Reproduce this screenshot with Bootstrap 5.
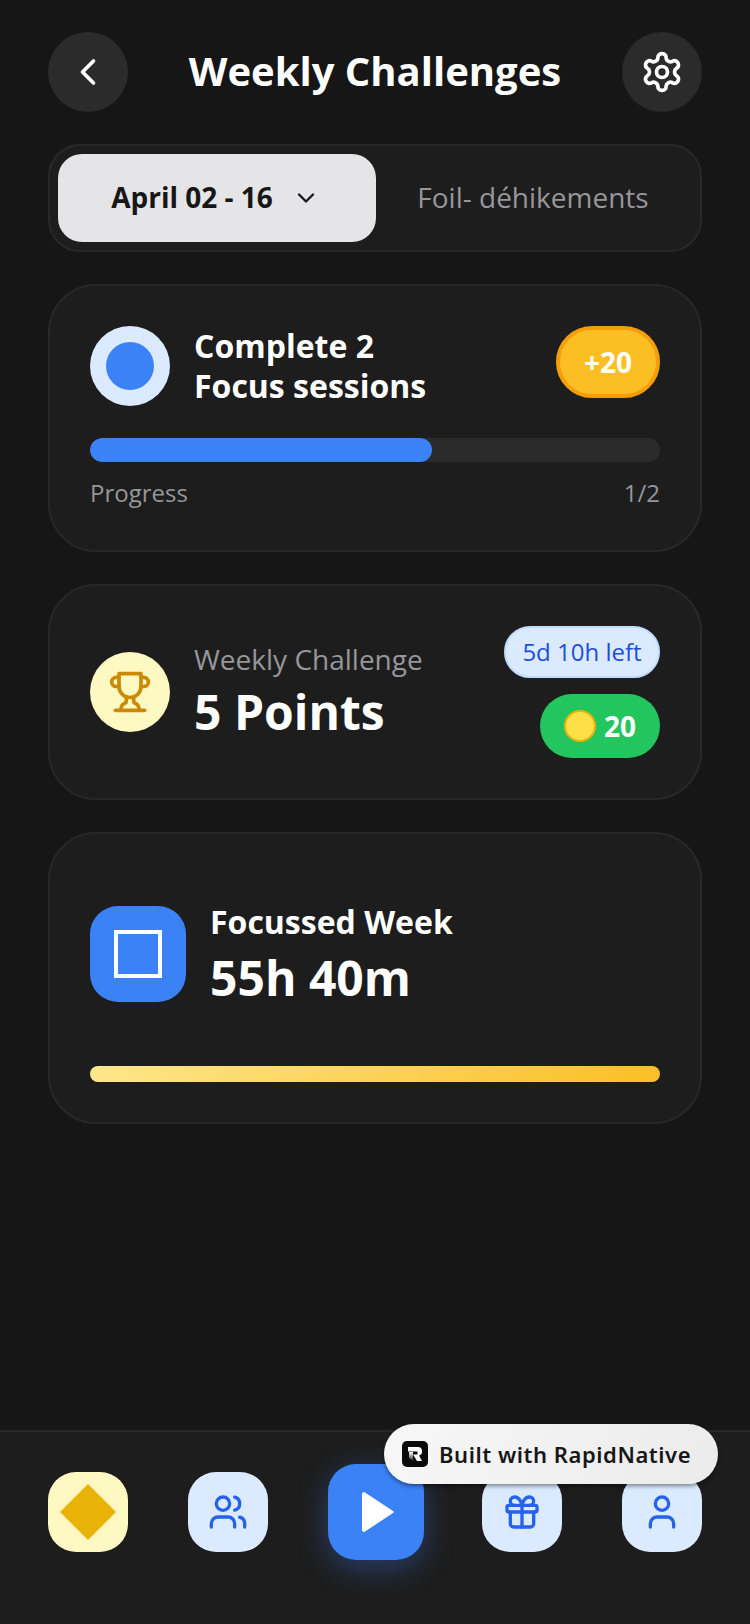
<!DOCTYPE html>
<html lang="en">
<head>
<meta charset="utf-8">
<title>Weekly Challenges</title>
<link href="https://cdn.jsdelivr.net/npm/bootstrap@5.3.0/dist/css/bootstrap.min.css" rel="stylesheet">
<style>
html,body{height:100%;}
body{background:#161616;font-family:"Open Sans","Liberation Sans",sans-serif;color:#fff;}
.screen{width:750px;height:1624px;overflow:hidden;}
.page-body{padding:32px 48px 0;}
.round-btn{width:80px;height:80px;border-radius:50%;background:#2b2b2b;}
.page-title{font-size:40px;line-height:56px;font-weight:700;margin-bottom:2px;}
.tab-wrap{height:108px;padding:8px;margin-top:32px;background:#1d1d1d;border:2px solid #282828;border-radius:32px;}
.tab-on{width:318px;padding-right:3px;gap:19px;background:#e5e5e7;border-radius:24px;color:#171717;font-size:28px;font-weight:700;}
.tab-on span{margin-bottom:2px;}
.tab-off{font-size:28px;color:#96969b;padding:0 2px 2px 0;}
.panel{margin-top:32px;padding:40px;background:#1d1d1d;border:2px solid #282828;border-radius:48px;}
.disc{width:80px;height:80px;border-radius:50%;}
.disc-blue{background:#dbeafe;}
.disc-dot{width:48px;height:48px;border-radius:50%;background:#3b82f6;}
.disc-yellow{background:#fef9c3;}
.task-title{font-size:32px;line-height:40px;font-weight:700;}
.gain-pill{width:104px;height:72px;background:#fbbf24;border:4px solid #f59e0b;border-radius:36px;font-size:28px;font-weight:700;}
.track{height:24px;margin-top:32px;background:#2b2b2b;border-radius:12px;overflow:hidden;}
.track-fill{height:100%;background:#3b82f6;border-radius:12px;}
.meter-row{margin-top:14px;font-size:24px;line-height:34px;color:#96969b;}
.sub-label{font-size:28px;line-height:36px;color:#96969b;}
.big-value{font-size:48px;font-weight:700;}
.value-points{line-height:62px;margin-top:4px;}
.value-time{line-height:56px;margin-top:8px;}
.time-pill{width:156px;height:52px;background:#dbeafe;border:2px solid #bfdbfe;border-radius:26px;font-size:24px;color:#1d4ed8;}
.coin-pill{width:120px;height:64px;margin-top:16px;background:#22c55e;border-radius:32px;font-size:28px;font-weight:700;}
.coin{width:32px;height:32px;border-radius:50%;background:#fde047;border:2px solid #eab308;}
.square-icon{width:96px;height:96px;background:#3b82f6;border-radius:28px;}
.square-in{width:48px;height:48px;border:4px solid #fff;}
.week-block{padding:28px 0;}
.week-title{font-size:32px;line-height:40px;font-weight:700;}
.week-bar{height:16px;margin-top:32px;border-radius:8px;background:linear-gradient(90deg,#fde68a,#fbbf24);}
.tab-bar{position:relative;height:194px;padding:40px 48px 72px;gap:60px;background:#1d1d1d;border-top:2px solid #282828;}
.nav-tile{width:80px;height:80px;border-radius:28px;background:#dbeafe;}
.nav-gold{background:#fef9c3;}
.nav-play{width:96px;height:96px;margin-right:-2px;border-radius:28px;background:#3b82f6;box-shadow:0 8px 30px rgba(59,130,246,.35);}
.built-tag{position:absolute;left:384px;top:-8px;width:334px;height:60px;padding-left:18px;gap:11px;border-radius:30px;background:linear-gradient(120deg,#f7f7f7,#ebebeb);box-shadow:0 2px 4px rgba(0,0,0,.45);color:#171717;font-family:"Noto Sans","Open Sans",sans-serif;font-size:22px;font-weight:600;letter-spacing:.55px;}
.tag-logo{width:26px;height:26px;}
</style>
</head>
<body>
<div class="screen d-flex flex-column">
  <div class="page-body flex-grow-1">
    <header class="d-flex justify-content-between align-items-center">
      <div class="round-btn d-flex align-items-center justify-content-center">
        <svg width="44" height="44" viewBox="0 0 24 24" fill="none" stroke="#fff" stroke-width="2" stroke-linecap="round" stroke-linejoin="round"><path d="m15 18-6-6 6-6"/></svg>
      </div>
      <div class="page-title">Weekly Challenges</div>
      <div class="round-btn d-flex align-items-center justify-content-center">
        <svg width="44" height="44" viewBox="0 0 24 24" fill="none" stroke="#fff" stroke-width="2" stroke-linecap="round" stroke-linejoin="round"><path d="M12.22 2h-.44a2 2 0 0 0-2 2v.18a2 2 0 0 1-1 1.73l-.43.25a2 2 0 0 1-2 0l-.15-.08a2 2 0 0 0-2.73.73l-.22.38a2 2 0 0 0 .73 2.73l.15.1a2 2 0 0 1 1 1.72v.51a2 2 0 0 1-1 1.74l-.15.09a2 2 0 0 0-.73 2.73l.22.38a2 2 0 0 0 2.73.73l.15-.08a2 2 0 0 1 2 0l.43.25a2 2 0 0 1 1 1.73V20a2 2 0 0 0 2 2h.44a2 2 0 0 0 2-2v-.18a2 2 0 0 1 1-1.73l.43-.25a2 2 0 0 1 2 0l.15.08a2 2 0 0 0 2.73-.73l.22-.39a2 2 0 0 0-.73-2.73l-.15-.08a2 2 0 0 1-1-1.74v-.5a2 2 0 0 1 1-1.74l.15-.09a2 2 0 0 0 .73-2.73l-.22-.38a2 2 0 0 0-2.73-.73l-.15.08a2 2 0 0 1-2 0l-.43-.25a2 2 0 0 1-1-1.73V4a2 2 0 0 0-2-2z"/><circle cx="12" cy="12" r="3"/></svg>
      </div>
    </header>

    <div class="tab-wrap d-flex">
      <div class="tab-on d-flex align-items-center justify-content-center">
        <span>April 02 - 16</span>
        <svg width="28" height="28" viewBox="0 0 24 24" fill="none" stroke="#171717" stroke-width="2" stroke-linecap="round" stroke-linejoin="round"><path d="m6 9 6 6 6-6"/></svg>
      </div>
      <div class="tab-off flex-grow-1 d-flex align-items-center justify-content-center">Foil- déhikements</div>
    </div>

    <section class="panel">
      <div class="d-flex align-items-start">
        <div class="disc disc-blue d-flex align-items-center justify-content-center flex-shrink-0"><div class="disc-dot"></div></div>
        <div class="task-title flex-grow-1 ms-4">Complete 2<br>Focus sessions</div>
        <div class="gain-pill d-flex align-items-center justify-content-center">+20</div>
      </div>
      <div class="track"><div class="track-fill" style="width:60%"></div></div>
      <div class="meter-row d-flex justify-content-between"><span>Progress</span><span>1/2</span></div>
    </section>

    <section class="panel d-flex align-items-center">
      <div class="disc disc-yellow d-flex align-items-center justify-content-center flex-shrink-0">
        <svg width="44" height="44" viewBox="0 0 24 24" fill="none" stroke="#ca8a04" stroke-width="2" stroke-linecap="round" stroke-linejoin="round"><path d="M6 9H4.5a2.5 2.5 0 0 1 0-5H6"/><path d="M18 9h1.5a2.5 2.5 0 0 0 0-5H18"/><path d="M4 22h16"/><path d="M10 14.66V17c0 .55-.47.98-.97 1.21C7.85 18.75 7 20.24 7 22"/><path d="M14 14.66V17c0 .55.47.98.97 1.21C16.15 18.75 17 20.24 17 22"/><path d="M18 2H6v7a6 6 0 0 0 12 0V2Z"/></svg>
      </div>
      <div class="flex-grow-1 ms-4">
        <div class="sub-label">Weekly Challenge</div>
        <div class="big-value value-points">5 Points</div>
      </div>
      <div class="d-flex flex-column align-items-end">
        <div class="time-pill d-flex align-items-center justify-content-center">5d 10h left</div>
        <div class="coin-pill d-flex align-items-center justify-content-center gap-2"><span class="coin"></span><span>20</span></div>
      </div>
    </section>

    <section class="panel">
      <div class="week-block d-flex align-items-center">
        <div class="square-icon d-flex align-items-center justify-content-center flex-shrink-0"><div class="square-in"></div></div>
        <div class="ms-4">
          <div class="week-title">Focussed Week</div>
          <div class="big-value value-time">55h 40m</div>
        </div>
      </div>
      <div class="week-bar"></div>
    </section>
  </div>

  <nav class="tab-bar d-flex align-items-center">
    <div class="nav-tile nav-gold d-flex align-items-center justify-content-center">
      <svg width="56" height="56" viewBox="0 0 56 56"><path d="M28 0 56 28 28 56 0 28Z" fill="#eab308"/></svg>
    </div>
    <div class="nav-tile d-flex align-items-center justify-content-center">
      <svg width="40" height="40" viewBox="0 0 24 24" fill="none" stroke="#2563eb" stroke-width="2" stroke-linecap="round" stroke-linejoin="round"><path d="M16 21v-2a4 4 0 0 0-4-4H6a4 4 0 0 0-4 4v2"/><circle cx="9" cy="7" r="4"/><path d="M22 21v-2a4 4 0 0 0-3-3.87"/><path d="M16 3.13a4 4 0 0 1 0 7.75"/></svg>
    </div>
    <div class="nav-play d-flex align-items-center justify-content-center">
      <svg width="48" height="48" viewBox="0 0 48 48"><path d="M10 6a2 2 0 0 1 3-1.6L41 23a1.2 1.2 0 0 1 0 2L13 43.6A2 2 0 0 1 10 42Z" fill="#fff"/></svg>
    </div>
    <div class="nav-tile d-flex align-items-center justify-content-center">
      <svg width="40" height="40" viewBox="0 0 24 24" fill="none" stroke="#2563eb" stroke-width="2" stroke-linecap="round" stroke-linejoin="round"><rect x="3" y="8" width="18" height="4" rx="1"/><path d="M12 8v13"/><path d="M19 12v7a2 2 0 0 1-2 2H7a2 2 0 0 1-2-2v-7"/><path d="M7.5 8a2.5 2.5 0 0 1 0-5A4.8 8 0 0 1 12 8a4.8 8 0 0 1 4.5-5 2.5 2.5 0 0 1 0 5"/></svg>
    </div>
    <div class="nav-tile d-flex align-items-center justify-content-center">
      <svg width="40" height="40" viewBox="0 0 24 24" fill="none" stroke="#2563eb" stroke-width="2" stroke-linecap="round" stroke-linejoin="round"><path d="M19 21v-2a4 4 0 0 0-4-4H9a4 4 0 0 0-4 4v2"/><circle cx="12" cy="7" r="4"/></svg>
    </div>
    <div class="built-tag d-flex align-items-center">
      <svg class="tag-logo" viewBox="0 0 26 26"><defs><linearGradient id="stemFade" x1="0" y1="0" x2="0" y2="1"><stop offset="0" stop-color="#fff"/><stop offset="1" stop-color="#222"/></linearGradient></defs><rect width="26" height="26" rx="5" fill="#0b0b0b"/><path d="M6 6h10a4 4 0 0 1 4 4v1a3.500 3.500 0 0 1-3 3.400L20 20h-5l-4-6.500h4.500V10.500H6Z" fill="#fff"/><path d="M7 11h4v9l-4-3Z" fill="url(#stemFade)"/></svg>
      <span>Built with RapidNative</span>
    </div>
  </nav>
</div>
<script src="https://cdn.jsdelivr.net/npm/bootstrap@5.3.0/dist/js/bootstrap.bundle.min.js"></script>
</body>
</html>
